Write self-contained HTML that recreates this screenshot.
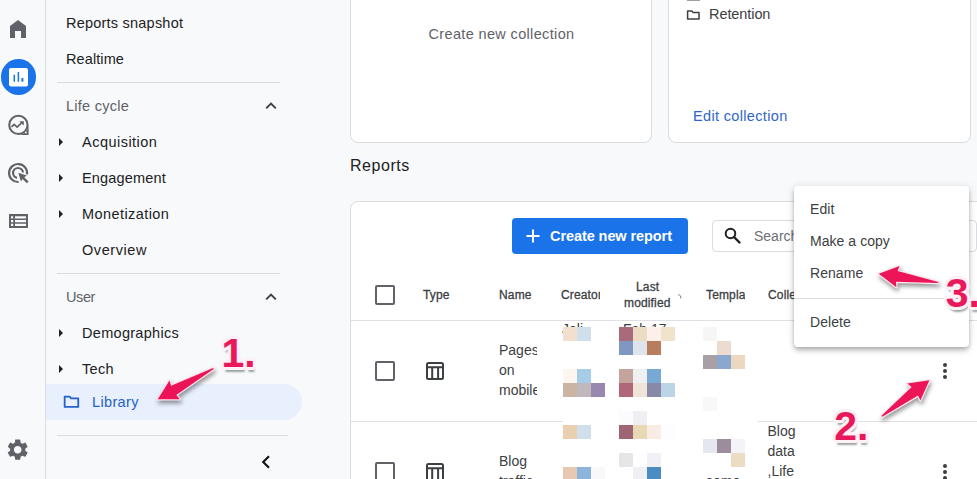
<!DOCTYPE html>
<html lang="en">
<head>
<meta charset="utf-8">
<title>Library - Reports</title>
<style>
*{box-sizing:border-box;margin:0;padding:0}
html,body{width:977px;height:479px;overflow:hidden;background:#f8f9fa;font-family:"Liberation Sans",Arial,sans-serif;color:#202124}
#app{position:relative;width:977px;height:479px;overflow:hidden;background:#f8f9fa}
.abs{position:absolute}
.t{position:absolute;white-space:nowrap;line-height:1}
/* rail */
#rail{position:absolute;left:0;top:0;width:46px;height:479px;border-right:1px solid #dadce0;background:#f8f9fa}
.ico{position:absolute}
/* nav */
.nav{font-size:14.5px;color:#202124;letter-spacing:.1px}
.navh{font-size:14.5px;color:#5f6368;letter-spacing:.1px}
.hr{position:absolute;height:1px;background:#dadce0}
.tri{position:absolute;width:0;height:0;border-left:4px solid #202124;border-top:4px solid transparent;border-bottom:4px solid transparent}
/* cards */
.card{position:absolute;background:#fff;border:1px solid #dadce0;border-radius:8px}
.th{font-size:12px;color:#3c4043;font-weight:normal;-webkit-text-stroke:.3px #3c4043;letter-spacing:.15px}
.td{font-size:14px;color:#3c4043;line-height:20px;white-space:normal}
.cb{position:absolute;width:20px;height:20px;border:2px solid #5f6368;border-radius:2px;background:#fff}
.px{position:absolute;width:14px;height:14px}
.mi{font-size:14px;color:#3c4043;letter-spacing:.05px}
.num{position:absolute;font-weight:bold;font-size:41px;line-height:1;color:#e8185a;white-space:nowrap;
 text-shadow:3.00px 0.00px 0 #fff0f6,2.77px 1.15px 0 #fff0f6,2.12px 2.12px 0 #fff0f6,1.15px 2.77px 0 #fff0f6,0.00px 3.00px 0 #fff0f6,-1.15px 2.77px 0 #fff0f6,-2.12px 2.12px 0 #fff0f6,-2.77px 1.15px 0 #fff0f6,-3.00px 0.00px 0 #fff0f6,-2.77px -1.15px 0 #fff0f6,-2.12px -2.12px 0 #fff0f6,-1.15px -2.77px 0 #fff0f6,-0.00px -3.00px 0 #fff0f6,1.15px -2.77px 0 #fff0f6,2.12px -2.12px 0 #fff0f6,2.77px -1.15px 0 #fff0f6,2.00px 0.00px 0 #ffdfeb,1.41px 1.41px 0 #ffdfeb,0.00px 2.00px 0 #ffdfeb,-1.41px 1.41px 0 #ffdfeb,-2.00px 0.00px 0 #ffdfeb,-1.41px -1.41px 0 #ffdfeb,-0.00px -2.00px 0 #ffdfeb,1.41px -1.41px 0 #ffdfeb,1.00px 0.00px 0 #ffdfeb,0.71px 0.71px 0 #ffdfeb,0.00px 1.00px 0 #ffdfeb,-0.71px 0.71px 0 #ffdfeb,-1.00px 0.00px 0 #ffdfeb,-0.71px -0.71px 0 #ffdfeb,-0.00px -1.00px 0 #ffdfeb,0.71px -0.71px 0 #ffdfeb,1.5px 4.5px 2px rgba(20,40,40,.42)}
</style>
</head>
<body>
<div id="app">

<!-- ===== main content ===== -->
<div class="card" style="left:350px;top:-20px;width:302px;height:163px"></div>
<div class="t" style="left:428.500px;top:27px;font-size:14.500px;color:#5f6368;letter-spacing:.35px">Create new collection</div>

<div class="card" style="left:668px;top:-20px;width:302.500px;height:163px"></div>
<svg class="abs" style="left:685px;top:8px" width="18" height="14" viewBox="685 8 18 14"><path d="M687.600 11.100h4.200l1.200 1.300h6v6.600h-11.400z" fill="none" stroke="#3c4043" stroke-width="1.500" stroke-linejoin="round"/></svg>
<div class="abs" style="left:687px;top:0;width:13px;height:1px;background:#9aa0a6"></div>
<div class="t" style="left:709px;top:7px;font-size:14.500px;color:#3c4043;letter-spacing:-.08px">Retention</div>
<div class="t" style="left:693px;top:108.500px;font-size:14.500px;color:#2f65c8;letter-spacing:.34px">Edit collection</div>

<div class="t" style="left:350px;top:157.500px;font-size:16px;color:#202124;letter-spacing:.55px">Reports</div>

<!-- table card -->
<div class="card" style="left:350px;top:201px;width:640px;height:300px;border-radius:8px"></div>

<!-- create button -->
<div class="abs" style="left:512px;top:218px;width:176px;height:36px;background:#1a73e8;border-radius:4px"></div>
<svg class="abs" style="left:526px;top:229px" width="14" height="14" viewBox="0 0 14 14"><path d="M7 0.5v13M0.5 7h13" stroke="#fff" stroke-width="2" fill="none"/></svg>
<div class="t" style="left:550px;top:229px;font-size:14.5px;color:#fff;font-weight:bold;letter-spacing:-.08px">Create new report</div>

<!-- search -->
<div class="abs" style="left:712px;top:220px;width:264.500px;height:32px;border:1px solid #dadce0;border-radius:4px;background:#fff"></div>
<svg class="abs" style="left:724px;top:227px" width="17" height="17" viewBox="0 0 17 17"><circle cx="6.5" cy="6.5" r="4.8" fill="none" stroke="#202124" stroke-width="2"/><path d="M10 10l5.5 5.5" stroke="#202124" stroke-width="2.4" stroke-linecap="round"/></svg>
<div class="t" style="left:754px;top:229px;font-size:14px;color:#6b7075">Search</div>

<!-- header -->
<div class="cb" style="left:375px;top:285px"></div>
<div class="t th" style="left:423px;top:289px">Type</div>
<div class="t th" style="left:499px;top:289px">Name</div>
<div class="t th" style="left:561px;top:289px;width:39px;height:14px;overflow:hidden">Creator</div>
<div class="t th" style="left:636px;top:281px">Last</div>
<div class="t th" style="left:624px;top:297px">modified</div>
<svg class="abs" style="left:677px;top:293px" width="6" height="7" viewBox="0 0 6 7"><path d="M1.200 1.500l2.300 1.300 0.300 2.700" fill="none" stroke="#80868b" stroke-width="1"/></svg>
<div class="t th" style="left:706px;top:289px;width:38.500px;height:14px;overflow:hidden">Templa</div>
<div class="t th" style="left:768px;top:289px">Colle</div>
<div class="hr" style="left:351px;top:320px;width:626px;background:#dfe0e3"></div>

<!-- row 1 -->
<div class="cb" style="left:375px;top:361px"></div>
<svg class="abs" style="left:425px;top:361px" width="20" height="20" viewBox="0 0 20 20"><rect x="2" y="2" width="16" height="16" rx="1.5" fill="none" stroke="#3c4043" stroke-width="2"/><path d="M2 6.300h16M7.200 6.300v11.700M13.100 6.300v11.700" stroke="#3c4043" stroke-width="2" fill="none"/></svg>
<div class="t td" style="left:499px;top:340px;width:38.300px;overflow:hidden">Pages<br>on<br>mobile</div>
<div class="hr" style="left:351px;top:421px;width:626px;background:#dfe0e3"></div>

<!-- row 2 -->
<div class="cb" style="left:375px;top:462px"></div>
<svg class="abs" style="left:425px;top:462px" width="20" height="20" viewBox="0 0 20 20"><rect x="2" y="2" width="16" height="16" rx="1.5" fill="none" stroke="#3c4043" stroke-width="2"/><path d="M2 6.300h16M7.200 6.300v11.700M13.100 6.300v11.700" stroke="#3c4043" stroke-width="2" fill="none"/></svg>
<div class="t td" style="left:499px;top:451px;width:38.300px;overflow:hidden">Blog<br>traffic</div>
<div class="t td" style="left:767.500px;top:421px;width:32px">Blog<br>data<br>,Life</div>

<!-- kebabs -->
<svg class="abs" style="left:942px;top:362px" width="6" height="18" viewBox="0 0 6 18"><circle cx="3" cy="3" r="2" fill="#3c4043"/><circle cx="3" cy="9" r="2" fill="#3c4043"/><circle cx="3" cy="15" r="2" fill="#3c4043"/></svg>
<svg class="abs" style="left:942px;top:462.500px" width="6" height="18" viewBox="0 0 6 18"><circle cx="3" cy="3" r="2" fill="#3c4043"/><circle cx="3" cy="9" r="2" fill="#3c4043"/><circle cx="3" cy="15" r="2" fill="#3c4043"/></svg>

<!-- peeking text under blur -->
<div class="t" style="left:562px;top:322px;font-size:14px;color:#3c4043">Jeli</div>
<div class="t" style="left:623px;top:322px;font-size:14px;color:#3c4043">Feb 17,</div>
<div class="t" style="left:706px;top:473.500px;font-size:14px;color:#3c4043">some</div>

<!-- blur overlay -->
<div class="abs" id="blur" style="left:563px;top:327px;width:195px;height:149px;background:#fff"></div>
<div id="pxs"><i class="px" style="left:563px;top:327px;background:#f1dfd0"></i><i class="px" style="left:577px;top:327px;background:#cfe0ec"></i><i class="px" style="left:619px;top:327px;background:#a96a7c"></i><i class="px" style="left:633px;top:327px;background:#ecdcc4"></i><i class="px" style="left:647px;top:327px;background:#fdf0ea"></i><i class="px" style="left:661px;top:327px;background:#f1e2cc"></i><i class="px" style="left:703px;top:327px;background:#f6f6f6"></i><i class="px" style="left:619px;top:341px;background:#8098c0"></i><i class="px" style="left:633px;top:341px;background:#dde4ea"></i><i class="px" style="left:647px;top:341px;background:#b97c5c"></i><i class="px" style="left:717px;top:341px;background:#ecdcd0"></i><i class="px" style="left:703px;top:355px;background:#a8a0a4"></i><i class="px" style="left:717px;top:355px;background:#88a8d0"></i><i class="px" style="left:731px;top:355px;background:#ecd8c0"></i><i class="px" style="left:563px;top:369px;background:#fcf5f0"></i><i class="px" style="left:577px;top:369px;background:#a6cce8"></i><i class="px" style="left:619px;top:369px;background:#c4a49c"></i><i class="px" style="left:633px;top:369px;background:#eef0f2"></i><i class="px" style="left:647px;top:369px;background:#78a8d4"></i><i class="px" style="left:563px;top:383px;background:#ccb4a4"></i><i class="px" style="left:577px;top:383px;background:#c0b8bc"></i><i class="px" style="left:591px;top:383px;background:#9888b0"></i><i class="px" style="left:619px;top:383px;background:#b06878"></i><i class="px" style="left:633px;top:383px;background:#f0e4d8"></i><i class="px" style="left:647px;top:383px;background:#8888a8"></i><i class="px" style="left:661px;top:383px;background:#bcd4e8"></i><i class="px" style="left:703px;top:397px;background:#f8f8f8"></i><i class="px" style="left:619px;top:411px;background:#fbfbfd"></i><i class="px" style="left:633px;top:411px;background:#eef0f4"></i><i class="px" style="left:563px;top:425px;background:#e8d0b0"></i><i class="px" style="left:577px;top:425px;background:#d0dfec"></i><i class="px" style="left:619px;top:425px;background:#a06474"></i><i class="px" style="left:633px;top:425px;background:#e8d8b4"></i><i class="px" style="left:647px;top:425px;background:#f8ece4"></i><i class="px" style="left:661px;top:425px;background:#fefcfc"></i><i class="px" style="left:703px;top:439px;background:#e4e8ee"></i><i class="px" style="left:717px;top:439px;background:#9c8c9c"></i><i class="px" style="left:731px;top:439px;background:#f4f4f8"></i><i class="px" style="left:619px;top:453px;background:#e6e6e8"></i><i class="px" style="left:647px;top:453px;background:#f0f0f6"></i><i class="px" style="left:731px;top:453px;background:#ecdcc4"></i><i class="px" style="left:563px;top:467px;background:#e8c8b0"></i><i class="px" style="left:577px;top:467px;background:#8cb4dc"></i><i class="px" style="left:591px;top:467px;background:#f8f8fa"></i><i class="px" style="left:633px;top:467px;background:#eef0f4"></i><i class="px" style="left:647px;top:467px;background:#4c8cc4"></i></div>

<!-- popup menu -->
<div class="abs" style="left:794px;top:186px;width:175px;height:161px;background:#fff;border-radius:4px;box-shadow:0 2px 4px -1px rgba(0,0,0,.2),0 4px 5px 0 rgba(0,0,0,.14),0 1px 10px 0 rgba(0,0,0,.12)"></div>
<div class="t mi" style="left:810px;top:202px">Edit</div>
<div class="t mi" style="left:810px;top:234px">Make a copy</div>
<div class="t mi" style="left:810px;top:266px">Rename</div>
<div class="hr" style="left:794px;top:298px;width:175px"></div>
<div class="t mi" style="left:810px;top:315px">Delete</div>

<!-- ===== left rail ===== -->
<div id="rail"></div>
<div class="abs" style="left:0.5px;top:59px;width:35.5px;height:35.5px;border-radius:50%;background:#1a73e8"></div>

<!-- ===== nav ===== -->
<div class="t nav" style="left:66px;top:16px;letter-spacing:0.22px">Reports snapshot</div>
<div class="t nav" style="left:66px;top:52px">Realtime</div>
<div class="hr" style="left:57px;top:82px;width:223px"></div>
<div class="t navh" style="left:66px;top:99px;letter-spacing:0.27px">Life cycle</div>
<div class="tri" style="left:59px;top:138px"></div>
<div class="t nav" style="left:82px;top:135px;letter-spacing:0.48px">Acquisition</div>
<div class="tri" style="left:59px;top:174px"></div>
<div class="t nav" style="left:82px;top:171px;letter-spacing:0.17px">Engagement</div>
<div class="tri" style="left:59px;top:210px"></div>
<div class="t nav" style="left:82px;top:207px;letter-spacing:0.42px">Monetization</div>
<div class="t nav" style="left:82px;top:243px;letter-spacing:0.56px">Overview</div>
<div class="hr" style="left:57px;top:273px;width:223px"></div>
<div class="t navh" style="left:66px;top:290px;letter-spacing:-0.4px">User</div>
<div class="tri" style="left:59px;top:329px"></div>
<div class="t nav" style="left:82px;top:326px;letter-spacing:0.3px">Demographics</div>
<div class="tri" style="left:59px;top:365px"></div>
<div class="t nav" style="left:82px;top:362px;letter-spacing:0.3px">Tech</div>
<div class="abs" style="left:46px;top:384px;width:256px;height:36px;background:#e8f0fe;border-radius:0 18px 18px 0"></div>
<svg class="abs" style="left:62px;top:394px" width="20" height="16" viewBox="62 394 20 16"><path d="M64.650 396.700h5l1.400 1.600h7.200v8.600h-13.600z" fill="none" stroke="#2461c9" stroke-width="1.800" stroke-linejoin="round"/></svg>
<div class="t nav" style="left:92px;top:395px;color:#2461c9;letter-spacing:0.36px">Library</div>
<div class="hr" style="left:57px;top:435px;width:231px"></div>


<!-- rail icons -->
<svg class="abs" style="left:6px;top:17px" width="24" height="24" viewBox="0 0 24 24"><path d="M12 3L4 9v12h5v-7h6v7h5V9z" fill="#5f6368"/></svg>
<svg class="abs" style="left:8px;top:67px" width="22" height="22" viewBox="0 0 22 22"><rect x="1" y="1" width="19" height="18.500" rx="2" fill="#fff"/><path d="M6.300 7.700v7M10.400 5v9.700" stroke="#1a73e8" stroke-width="1.500" fill="none"/><path d="M14.400 11v3.700" stroke="#1a73e8" stroke-width="2" fill="none"/></svg>
<svg class="abs" style="left:2px;top:108px" width="34" height="34" viewBox="2 108 34 34"><path d="M28.600 124.900V135.100H18.400A10.200 10.200 0 0 0 28.600 124.900z" fill="#5f6368"/><circle cx="18.400" cy="124.900" r="9.150" fill="#f8f9fa" stroke="#5f6368" stroke-width="2.100"/><circle cx="25.900" cy="132.500" r="0.900" fill="#f8f9fa"/><path d="M11.500 126.900l2.600-2.500 3 2.800 4.800-4.600" fill="none" stroke="#5f6368" stroke-width="1.700"/><path d="M19.300 121.200h4.500v4.200z" fill="#5f6368"/></svg>
<svg class="abs" style="left:2px;top:156px" width="34" height="34" viewBox="2 156 34 34"><path d="M27 174.300A9 9 0 1 0 18.600 182" fill="none" stroke="#5f6368" stroke-width="2.200"/><path d="M23 172.500A5 5 0 1 0 17 177.900" fill="none" stroke="#5f6368" stroke-width="2.200"/><path d="M18.300 172.800l8.600 2.800-2.700 1.600 4.400 4.400-1.700 1.700-4.400-4.400-1.600 2.700z" fill="#5f6368"/></svg>
<svg class="abs" style="left:9px;top:214px" width="19" height="14" viewBox="0 0 19 14"><path d="M0 0h19v14h-19z M2 2.200v2.200h2.200v-2.200z M6 2.200v2.200h11v-2.200z M2 6v2.200h2.200v-2.200z M6 6v2.200h11v-2.200z M2 9.800v2.200h2.200v-2.200z M6 9.800v2.200h11v-2.200z" fill="#5f6368" fill-rule="evenodd"/></svg>
<svg class="abs" style="left:5.400px;top:437.300px" width="25.400" height="25.400" viewBox="0 0 24 24"><path fill="#5f6368" d="M19.140 12.940c.04-.3.060-.61.060-.94 0-.32-.02-.64-.07-.94l2.030-1.580c.18-.14.230-.41.120-.61l-1.920-3.320c-.12-.22-.37-.29-.59-.22l-2.390.96c-.5-.38-1.030-.7-1.620-.94l-.36-2.540c-.04-.24-.24-.41-.48-.41h-3.840c-.24 0-.43.170-.47.410l-.36 2.540c-.59.240-1.130.57-1.620.94l-2.390-.96c-.22-.08-.47 0-.59.220L2.740 8.870c-.12.210-.08.470.12.610l2.030 1.580c-.05.300-.09.630-.09.940s.02.640.07.940l-2.030 1.580c-.18.140-.23.410-.12.610l1.920 3.320c.12.220.37.290.59.220l2.390-.96c.5.380 1.030.7 1.620.94l.36 2.540c.05.240.24.410.48.410h3.840c.24 0 .44-.17.470-.41l.36-2.540c.59-.24 1.130-.56 1.620-.94l2.390.96c.22.080.47 0 .59-.22l1.920-3.320c.12-.22.070-.47-.12-.61l-2.010-1.580zM12 15.600c-1.980 0-3.600-1.620-3.600-3.600s1.620-3.600 3.600-3.600 3.600 1.620 3.600 3.600-1.620 3.600-3.600 3.600z"/></svg>
<!-- chevrons -->
<svg class="abs" style="left:264px;top:100px" width="14" height="12" viewBox="0 0 14 12"><path d="M2.200 8.300L7 3.500l4.800 4.800" fill="none" stroke="#3c4043" stroke-width="1.900"/></svg>
<svg class="abs" style="left:264px;top:291px" width="14" height="12" viewBox="0 0 14 12"><path d="M2.200 8.300L7 3.500l4.800 4.800" fill="none" stroke="#3c4043" stroke-width="1.900"/></svg>
<svg class="abs" style="left:259px;top:454px" width="14" height="16" viewBox="0 0 14 16"><path d="M10 2.300L4.200 8l5.800 5.700" fill="none" stroke="#111" stroke-width="2.100"/></svg>

<!-- annotations -->
<svg id="arrows" class="abs" style="left:0;top:0;filter:drop-shadow(1px 3px 2px rgba(0,0,0,.4))" width="977" height="479" viewBox="0 0 977 479"><g fill="#ec1558" stroke="#fde6ee" stroke-width="2.500" stroke-linejoin="round" paint-order="stroke"><polygon points="157.7,399.3 180.0,399.3 176.3,395.1 213.7,368.9 213.1,367.9 171.1,385.7 169.5,380.4"/><polygon points="929.4,380.2 907.3,383.4 911.6,386.9 881.5,415.7 882.3,416.7 918.1,395.6 920.4,400.6"/><polygon points="878.7,273.8 896.4,287.3 896.0,281.8 938.2,283.1 938.4,281.9 897.6,271.1 899.6,265.9"/></g></svg>
<div class="num" style="left:221.5px;top:333px">1.</div>
<div class="num" style="left:834.3px;top:406px">2.</div>
<div class="num" style="left:945.700px;top:272.500px">3.</div>

</div>
</body>
</html>
